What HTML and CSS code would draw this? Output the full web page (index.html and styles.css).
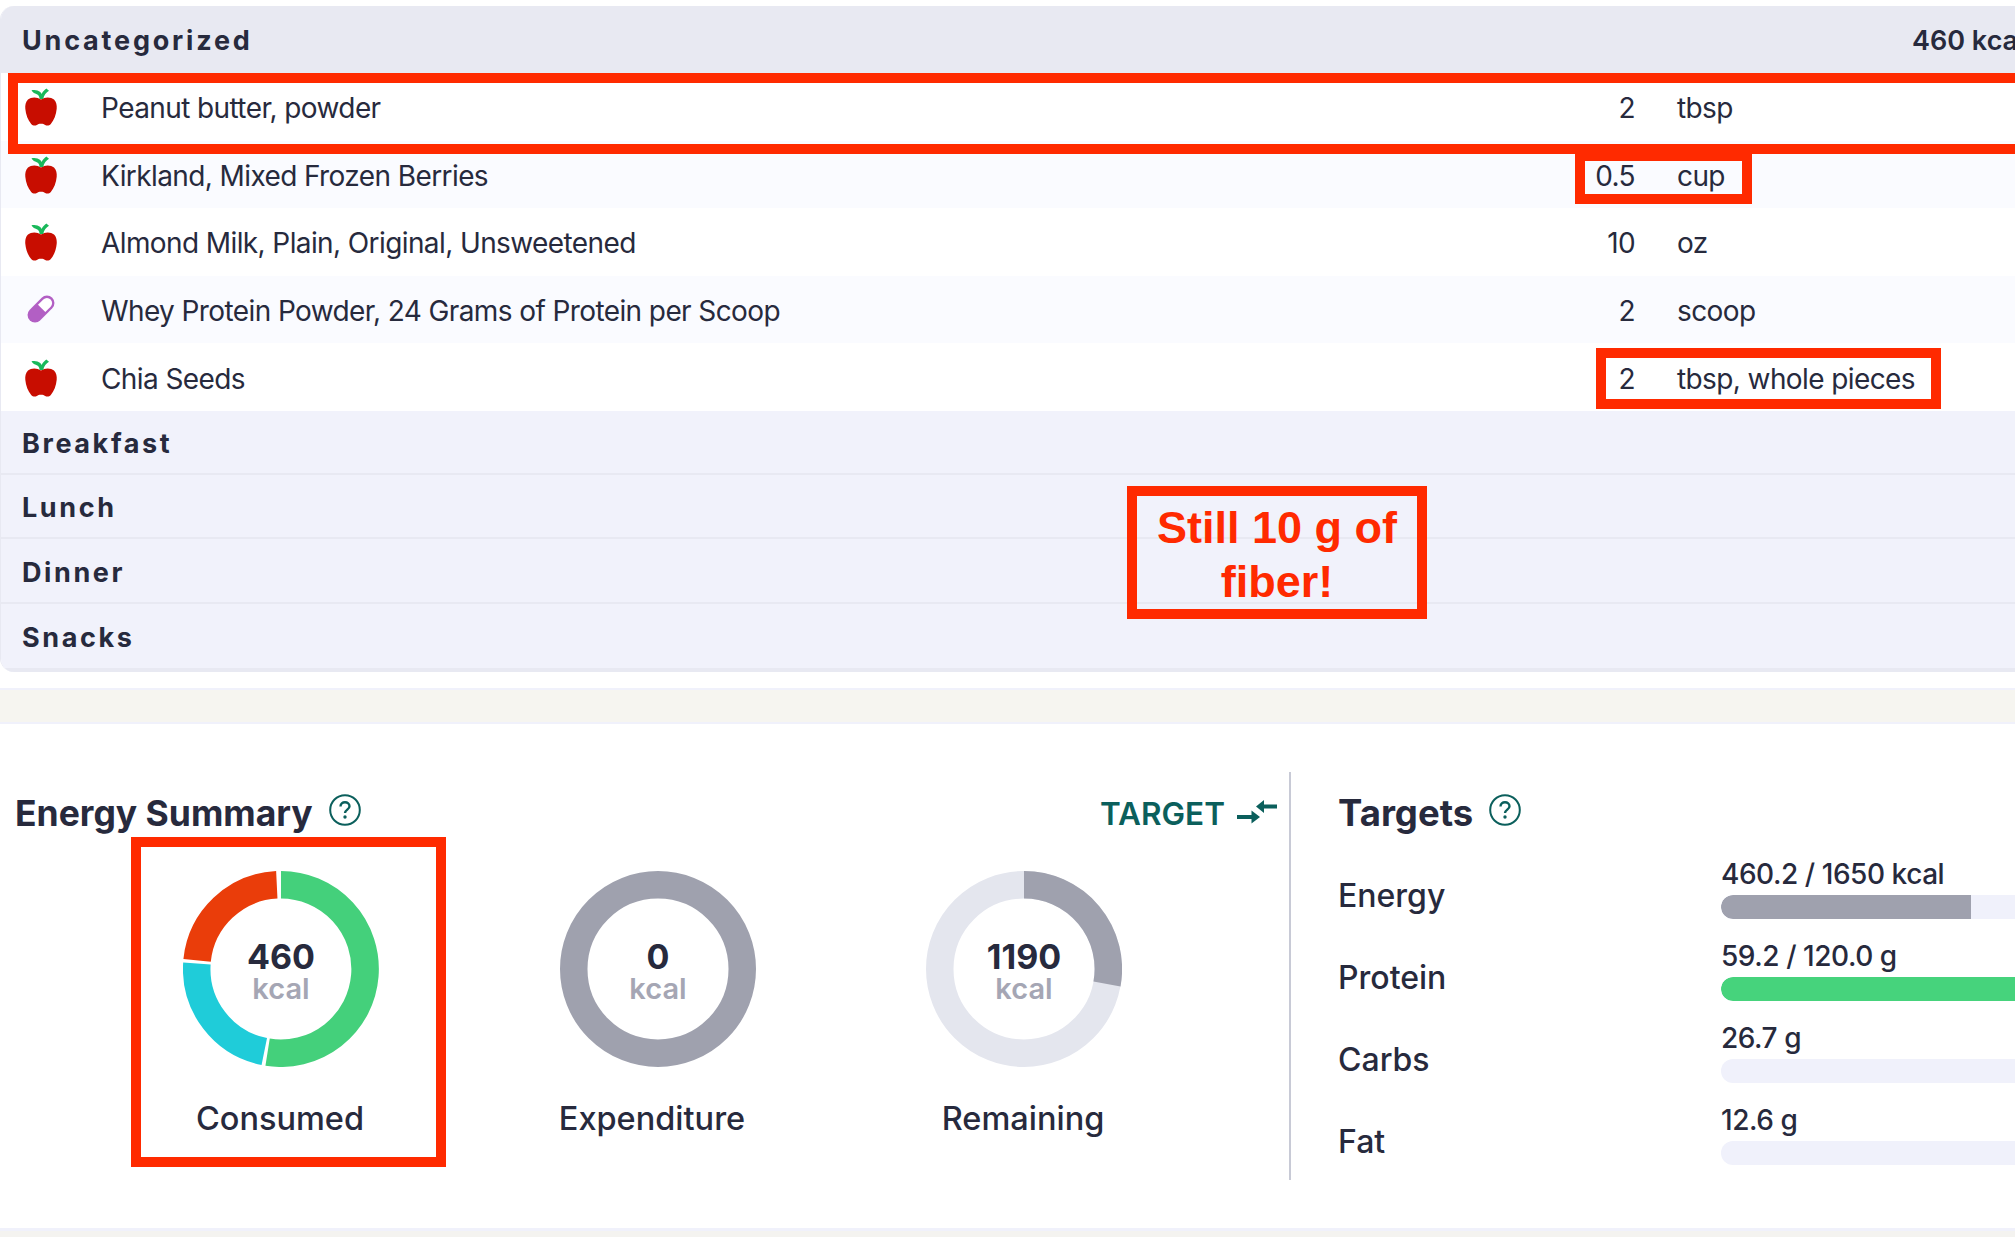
FILE: index.html
```html
<!DOCTYPE html>
<html lang="en">
<head>
<meta charset="utf-8">
<title>Diary</title>
<link rel="stylesheet" href="styles.css">
</head>
<body>
<svg class="defs" width="0" height="0" aria-hidden="true">
  <symbol id="apple" viewBox="0 0 32 38">
    <path fill="#c80d00" d="M16 11.500C12 8.600 6 8.800 3 11.600 0.600 13.800 0 17.400 0.300 20.800 0.800 26.600 3 32.400 6.200 36c1.600 1.800 4 2 5.600.9 1.400-.9 2-1.200 4.200-1.200s2.800.3 4.200 1.200c1.600 1.100 4 .9 5.600-.9 3.200-3.600 5.400-9.400 5.900-15.200.3-3.400-.3-7-2.700-9.200-3-2.800-9-3-13-.1z"/>
    <path fill="#19b85a" d="M14.500 11c0-2-.6-3.400-1.800-4.200C10.800 5.600 8 5.300 6.500 2.300c3-.8 6.700-.2 8.700 1.700.7.700 1.200 1.400 1.500 2C17.600 3.800 19.300 2 21.300.6l2.700 2.200c-2.800 1.700-5 4.200-5.800 8.200z"/>
  </symbol>
  <symbol id="help" viewBox="0 0 32 32">
    <circle cx="16" cy="16" r="14.800" fill="none" stroke="#0b5f5c" stroke-width="2"/>
    <path d="M11.500 12.500c0-2.600 2-4.200 4.500-4.200s4.500 1.500 4.500 3.900c0 3.300-4.500 3.500-4.500 6.900" fill="none" stroke="#0b5f5c" stroke-width="2.400"/>
    <circle cx="16" cy="23" r="1.700" fill="#0b5f5c"/>
  </symbol>
</svg>

<main class="page">
  <section class="card">
    <header class="group-head">
      <span>Uncategorized</span>
      <span class="group-total">460 kcal</span>
    </header>
    <div class="food-row">
      <svg class="food-icon"><use href="#apple"/></svg>
      <span>Peanut butter, powder</span><span class="qty">2</span><span class="unit">tbsp</span>
    </div>
    <div class="food-row tint">
      <svg class="food-icon"><use href="#apple"/></svg>
      <span>Kirkland, Mixed Frozen Berries</span><span class="qty">0.5</span><span class="unit">cup</span>
    </div>
    <div class="food-row">
      <svg class="food-icon"><use href="#apple"/></svg>
      <span>Almond Milk, Plain, Original, Unsweetened</span><span class="qty">10</span><span class="unit">oz</span>
    </div>
    <div class="food-row tint">
      <svg class="food-icon pill" viewBox="0 0 32 32">
        <g transform="rotate(45 16 16)">
          <rect x="8" y="-1" width="16" height="34" rx="8" fill="#b25fc4"/>
          <path d="M10.500 15V7a5.500 5.500 0 0 1 11 0v8z" fill="#fff"/>
        </g>
      </svg>
      <span>Whey Protein Powder, 24 Grams of Protein per Scoop</span><span class="qty">2</span><span class="unit">scoop</span>
    </div>
    <div class="food-row">
      <svg class="food-icon"><use href="#apple"/></svg>
      <span>Chia Seeds</span><span class="qty">2</span><span class="unit">tbsp, whole pieces</span>
    </div>
    <div class="meal">Breakfast</div>
    <div class="meal">Lunch</div>
    <div class="meal">Dinner</div>
    <div class="meal meal-last">Snacks</div>
  </section>

  <div class="band"></div>

  <section class="summary">
    <div class="energy">
      <div class="panel-head">
        <h2>Energy Summary</h2>
        <svg class="help"><use href="#help"/></svg>
        <span class="target">TARGET</span>
        <svg class="swap" viewBox="0 0 40 24">
          <path fill="#0b5f5c" d="M19 6.500 27 0v4.500h13v4H27V13zM0 15h14.500v-4.500L23 17l-8.500 6.500V19H0z"/>
        </svg>
      </div>
      <div class="gauges">
        <figure class="gauge">
          <div class="ring">
            <svg viewBox="0 0 196 196">
              <path class="arc green" d="M98 13.750A84.250 84.250 0 1 1 84.600 181.200"/>
              <path class="arc teal" d="M81.300 180.600A84.250 84.250 0 0 1 13.900 92.500"/>
              <path class="arc red" d="M14.100 89.300A84.250 84.250 0 0 1 93.800 13.850"/>
            </svg>
            <div class="ring-text"><b>460</b><span>kcal</span></div>
          </div>
          <figcaption>Consumed</figcaption>
        </figure>
        <figure class="gauge">
          <div class="ring">
            <svg viewBox="0 0 196 196">
              <circle class="arc gray" cx="98" cy="98" r="84.250"/>
            </svg>
            <div class="ring-text"><b>0</b><span>kcal</span></div>
          </div>
          <figcaption class="shift">Expenditure</figcaption>
        </figure>
        <figure class="gauge">
          <div class="ring">
            <svg viewBox="0 0 196 196">
              <circle class="arc pale" cx="98" cy="98" r="84.250"/>
              <path class="arc gray" d="M98 13.750A84.250 84.250 0 0 1 181 113"/>
            </svg>
            <div class="ring-text"><b>1190</b><span>kcal</span></div>
          </div>
          <figcaption>Remaining</figcaption>
        </figure>
      </div>
    </div>

    <div class="targets">
      <div class="panel-head">
        <h2>Targets</h2>
        <svg class="help"><use href="#help"/></svg>
      </div>
      <div class="target-row">
        <span class="target-name">Energy</span>
        <div class="target-data"><span class="amount">460.2 / 1650 kcal</span><div class="bar"><div class="fill fill-gray" style="width:250px"></div></div></div>
      </div>
      <div class="target-row">
        <span class="target-name">Protein</span>
        <div class="target-data"><span class="amount">59.2 / 120.0 g</span><div class="bar"><div class="fill fill-green" style="width:440px"></div></div></div>
      </div>
      <div class="target-row">
        <span class="target-name">Carbs</span>
        <div class="target-data"><span class="amount">26.7 g</span><div class="bar"></div></div>
      </div>
      <div class="target-row">
        <span class="target-name">Fat</span>
        <div class="target-data"><span class="amount">12.6 g</span><div class="bar"></div></div>
      </div>
    </div>
  </section>
  <div class="foot"></div>

  <div class="mark mark-row"></div>
  <div class="mark mark-cup"></div>
  <div class="mark mark-tbsp"></div>
  <div class="mark mark-note">Still 10 g of fiber!</div>
  <div class="mark mark-consumed"></div>
</main>
</body>
</html>
```

FILE: styles.css
```css
* { box-sizing: border-box; }
html, body { margin: 0; background: #fff; }
body {
  font-family: Inter, "Noto Sans", sans-serif;
  color: #272a3d;
}
.defs { position: absolute; }
.page {
  position: relative;
  width: 2015px;
  height: 1237px;
  overflow: hidden;
  padding-top: 6px;
}

/* diary card */
.card {
  width: 2060px;
  border-left: 1px solid #e8e9f2;
  border-radius: 14px 0 0 14px;
  overflow: hidden;
  background: #fff;
}
.group-head {
  display: flex;
  justify-content: space-between;
  align-items: center;
  height: 67px;
  padding: 2px 0 0 21px;
  background: #e8e9f2;
  font-size: 27px;
  font-weight: 700;
  letter-spacing: 2.800px;
}
.group-head .group-total {
  width: 148px;
  font-weight: 600;
  letter-spacing: 0;
  font-size: 27px;
}
.food-row {
  display: grid;
  grid-template-columns: 100px 1414px 120px 1fr;
  align-items: center;
  height: 67.600px;
  font-size: 28px;
  letter-spacing: -0.600px;
  padding-top: 3px;
}
.food-row.tint { background: #fafbff; }
.food-icon {
  width: 32px;
  height: 38px;
  margin-left: 24px;
  margin-top: -2px;
}
.food-icon.pill { width: 30px; height: 30px; margin-left: 25px; margin-top: -4px; }
.qty { text-align: right; grid-column: 3; }
.unit { padding-left: 42px; }
.meal {
  display: flex;
  align-items: center;
  height: 64.250px;
  padding: 3px 0 0 21px;
  background: #f1f2fb;
  border-bottom: 2px solid #e8e9f2;
  font-size: 27px;
  font-weight: 700;
  letter-spacing: 2.600px;
}
.meal-last { height: 68px; border-bottom-width: 4px; }

.band {
  height: 36px;
  margin-top: 16px;
  background: #f6f5f0;
  border-top: 2px solid #f0f1fb;
  border-bottom: 2px solid #f0f1fb;
}

/* summary */
.summary {
  display: flex;
  height: 504px;
  padding-top: 48px;
}
.energy {
  flex: none;
  width: 1291px;
  height: 408px;
  padding-left: 15px;
  border-right: 2px solid #c8cad6;
}
.panel-head {
  display: flex;
  align-items: center;
  height: 78px;
  padding-top: 5px;
  padding-right: 12px;
}
.panel-head h2 {
  margin: 0;
  font-size: 35.500px;
  font-weight: 700;
}
.help { width: 32px; height: 32px; margin: -6px 0 0 16px; flex: none; }
.target {
  margin-left: auto;
  font-size: 31.500px;
  font-weight: 600;
  color: #0b5f5c;
}
.swap { width: 40px; height: 24px; margin: -2px 0 0 12px; }
.gauges {
  display: grid;
  grid-template-columns: 377px 366px 196px;
  padding: 21px 0 0 168px;
}
.gauge { margin: 0; width: 196px; }
.ring { position: relative; width: 196px; height: 196px; }
.ring svg { display: block; width: 196px; height: 196px; }
.arc { fill: none; stroke-width: 27.500; }
.green { stroke: #44d07b; }
.teal { stroke: #1fccd9; }
.red { stroke: #ea3d0a; }
.gray { stroke: #9fa1ae; }
.pale { stroke: #e4e6ee; }
.ring-text {
  position: absolute;
  inset: 0;
  display: flex;
  flex-direction: column;
  align-items: center;
  justify-content: center;
  line-height: 32px;
  padding-top: 9px;
}
.ring-text b { font-size: 34px; font-weight: 700; }
.ring-text span { font-size: 29px; font-weight: 600; color: #a5a6b4; }
figcaption {
  margin: 32px -20px 0;
  text-align: center;
  font-size: 32.500px;
  font-weight: 500;
  line-height: 40px;
  transform: translateX(-1px);
}
figcaption.shift { transform: translateX(-6px); }

.targets { flex: 1; min-width: 0; padding-left: 47px; }
.targets h2 { font-size: 36.500px; }
.target-row {
  display: grid;
  grid-template-columns: 383px 900px;
  height: 82px;
  align-items: center;
}
.target-name { font-size: 32px; font-weight: 500; padding-top: 10px; }
.target-data { display: flex; flex-direction: column; margin-top: -5px; }
.amount { font-size: 28px; font-weight: 500; letter-spacing: -0.450px; line-height: 34px; margin-bottom: 4px; }
.bar {
  height: 24px;
  border-radius: 12px 0 0 12px;
  background: #f0f1fb;
  overflow: hidden;
}
.fill { height: 100%; border-radius: 12px 0 0 12px; }
.fill-gray { background: #9fa1ae; }
.fill-green { background: #46d37c; }

.foot {
  height: 9px;
  background: #f4f3f0;
  border-top: 3px solid #f0f1fb;
}

/* red annotations */
.mark {
  position: absolute;
  border: 10px solid #ff2a00;
}
.mark-row { left: 8px; top: 73px; width: 2100px; height: 81px; }
.mark-cup { left: 1575px; top: 151px; width: 177px; height: 53px; }
.mark-tbsp { left: 1596px; top: 348px; width: 345px; height: 61px; }
.mark-consumed { left: 131px; top: 837px; width: 315px; height: 330px; }
.mark-note {
  left: 1127px;
  top: 486px;
  width: 300px;
  height: 133px;
  padding: 5px 12px 0;
  text-align: center;
  font-family: "Liberation Sans", Arial, sans-serif;
  font-weight: 700;
  font-size: 45px;
  line-height: 54px;
  color: #ff2a00;
}
```
